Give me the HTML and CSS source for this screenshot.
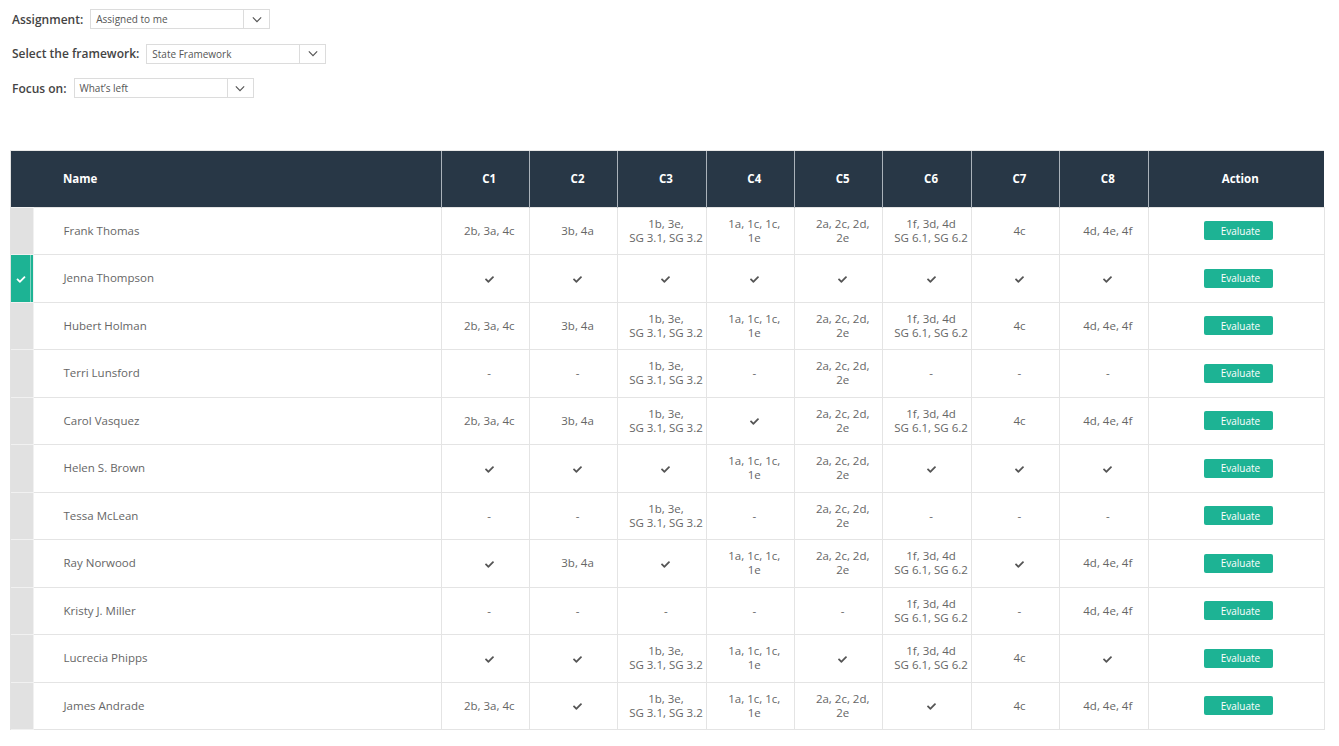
FILE: index.html
```html
<!DOCTYPE html>
<html lang="en">
<head>
<meta charset="utf-8">
<title>Evaluations</title>
<link rel="stylesheet" href="styles.css">
</head>
<body>
<svg width="0" height="0" class="defs" aria-hidden="true">
  <defs>
    <symbol id="chk" viewBox="0 0 512 512"><path d="M173.9 439.4l-166.4-166.4c-10-10-10-26.2 0-36.2l36.2-36.2c10-10 26.2-10 36.2 0L192 312.7 432.1 72.6c10-10 26.2-10 36.2 0l36.2 36.2c10 10 10 26.2 0 36.2l-294.4 294.4c-10 10-26.2 10-36.2 0z"/></symbol>
    <symbol id="chev" viewBox="0 0 12 8"><path d="M1 1.5l5 5 5-5" fill="none" stroke="currentColor" stroke-width="1.4"/></symbol>
  </defs>
</svg>
<div class="filters">
  <div class="filter"><span class="flabel">Assignment:</span><div class="select"><span class="sval">Assigned to me</span><span class="sarrow"><svg><use href="#chev"/></svg></span></div></div>
  <div class="filter"><span class="flabel">Select the framework:</span><div class="select"><span class="sval">State Framework</span><span class="sarrow"><svg><use href="#chev"/></svg></span></div></div>
  <div class="filter"><span class="flabel">Focus on:</span><div class="select"><span class="sval">What’s left</span><span class="sarrow"><svg><use href="#chev"/></svg></span></div></div>
</div>
<div class="tablewrap">
<table class="grid">
  <colgroup>
    <col class="c-strip"><col class="c-name"><col class="c-c"><col class="c-c"><col class="c-c"><col class="c-c"><col class="c-c"><col class="c-c"><col class="c-c"><col class="c-c"><col class="c-act">
  </colgroup>
  <thead>
    <tr><th class="hstrip"></th><th class="hname">Name</th><th>C1</th><th>C2</th><th>C3</th><th>C4</th><th>C5</th><th>C6</th><th>C7</th><th>C8</th><th>Action</th></tr>
  </thead>
  <tbody id="rows"></tbody>
</table>
</div>
<script src="app.js"></script>
</body>
</html>
```
FILE: app.js
```js
var C = 'CHK';
var A = '2b, 3a, 4c', B = '3b, 4a', S3 = '1b, 3e,<br>SG 3.1, SG 3.2', C4 = '1a, 1c, 1c,<br>1e', C5 = '2a, 2c, 2d,<br>2e', C6 = '1f, 3d, 4d<br>SG 6.1, SG 6.2', C7 = '4c', C8 = '4d, 4e, 4f', D = '-';
var data = [
  ['Frank Thomas', false, [A, B, S3, C4, C5, C6, C7, C8]],
  ['Jenna Thompson', true, [C, C, C, C, C, C, C, C]],
  ['Hubert Holman', false, [A, B, S3, C4, C5, C6, C7, C8]],
  ['Terri Lunsford', false, [D, D, S3, D, C5, D, D, D]],
  ['Carol Vasquez', false, [A, B, S3, C, C5, C6, C7, C8]],
  ['Helen S. Brown', false, [C, C, C, C4, C5, C, C, C]],
  ['Tessa McLean', false, [D, D, S3, D, C5, D, D, D]],
  ['Ray Norwood', false, [C, B, C, C4, C5, C6, C, C8]],
  ['Kristy J. Miller', false, [D, D, D, D, D, C6, D, C8]],
  ['Lucrecia Phipps', false, [C, C, S3, C4, C, C6, C7, C]],
  ['James Andrade', false, [A, C, S3, C4, C5, C, C7, C8]]
];
var chk = '<svg class="chk"><use href="#chk"/></svg>';
var html = '';
data.forEach(function (r) {
  html += '<tr>';
  html += '<td class="strip' + (r[1] ? ' sel' : '') + '">' + (r[1] ? '<svg class="schk"><use href="#chk"/></svg>' : '') + '</td>';
  html += '<td class="name">' + r[0] + '</td>';
  r[2].forEach(function (v) { html += '<td>' + (v === C ? chk : v) + '</td>'; });
  html += '<td class="act"><button class="btn">Evaluate</button></td>';
  html += '</tr>';
});
document.getElementById('rows').innerHTML = html;
```
FILE: styles.css
```css
* { box-sizing: border-box; }
html, body { margin: 0; padding: 0; background: #fff; }
body { font-family: "Open Sans", "Noto Sans", sans-serif; color: #666; }
.defs { position: absolute; width: 0; height: 0; overflow: hidden; }

.filters { padding: 9px 0 0 12px; display: flex; flex-direction: column; gap: 14.5px; }
.filter { display: flex; align-items: center; gap: 7px; height: 20px; }
.flabel { font-size: 12px; font-weight: 600; color: #444; }
.select { width: 180px; height: 20px; border: 1px solid #dcdcdc; display: flex; align-items: center; background: #fff; }
.sval { flex: 1; font-size: 10px; color: #555; padding-left: 5px; }
.sarrow { width: 26px; height: 100%; border-left: 1px solid #dcdcdc; display: flex; align-items: center; justify-content: center; color: #555; }
.sarrow svg { width: 10px; height: 7px; }

.tablewrap { margin: 52px 15px 0 10px; width: 1314px; border-top: 1px solid #e8e8e8; border-left: 1px solid #e2e2e2; }
.grid { border-collapse: collapse; table-layout: fixed; width: 1313px; }
.c-strip { width: 22px; }
.c-name { width: 408px; }
.c-c { width: 88.375px; }
.c-act { width: 176px; }

.grid th { background: #283746; color: #fff; font-size: 11.5px; font-weight: 700; height: 56px; text-align: center; border-left: 1px solid #aab2ba; padding: 0 0 0 8px; }
.grid th.hstrip { border-left: none; padding: 0; }
.grid th.hname { border-left: none; text-align: left; padding-left: 30px; }

.grid td { height: 47.5px; font-size: 11.5px; line-height: 14px; color: #666; text-align: center; border: 1px solid #e4e4e4; padding: 0 0 0 8px; }
.grid td.name { text-align: left; padding-left: 30px; border-left: none; }
.grid td.act { padding-left: 5px; }
.grid td.strip { background: #e1e1e1; border-color: #f1f1f1; border-left: none; padding: 0; }
.grid td.strip.sel { background: #1db394; box-shadow: inset -2px 0 0 #1db394, inset -3px 0 0 #7fd4c2; text-align: center; padding-right: 2px; }
.schk { width: 10px; height: 9px; fill: #fff; vertical-align: middle; }
.chk { width: 11px; height: 9px; fill: #555; vertical-align: middle; }

.btn { font-family: "Open Sans", "Noto Sans", sans-serif; font-size: 10px; color: #fff; background: #1db394; border: none; border-radius: 2px; width: 69px; height: 19px; padding: 0 0 0 4px; cursor: pointer; }
```
